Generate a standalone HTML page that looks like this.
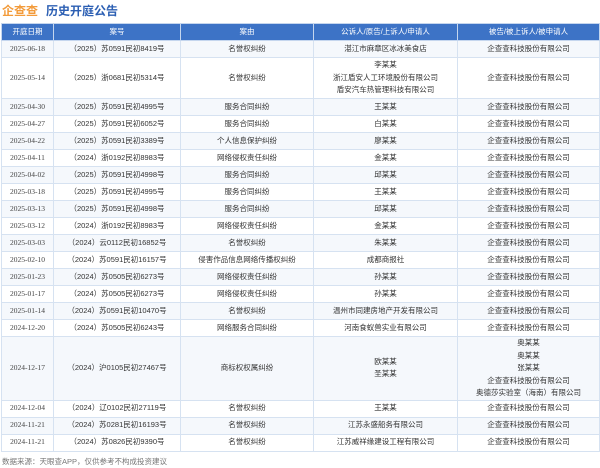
<!DOCTYPE html><html><head><meta charset="utf-8"><style>
body{margin:0;width:600px;height:468px;background:#fff;font-family:"Liberation Sans","Noto Sans CJK SC",sans-serif;position:relative;overflow:hidden}
.t{position:absolute;top:2px;left:2px;font-size:12px;font-weight:bold;white-space:nowrap}
.t .a{color:#f39b3a}.t .b{color:#2c5fb3;margin-left:8px}
table{position:absolute;top:23px;left:1px;width:598px;border-collapse:collapse;table-layout:fixed;font-size:7.5px;color:#333}
td,th{border:1px solid #d6e2f1;text-align:center;padding:0;line-height:12.5px}
th{background:#3d73c6;color:#fff;font-weight:normal;height:16px;border-color:#c5d6ee}
tr{height:17px}
tbody tr:nth-child(odd){background:#f5f8fc}
td.d{font-family:"Liberation Serif","Noto Sans CJK SC",serif;color:#444}
.f{position:absolute;top:456px;left:2px;font-size:7.5px;color:#777;white-space:nowrap}
</style></head><body>
<div class="t"><span class="a">企查查</span><span class="b">历史开庭公告</span></div>
<table>
<colgroup><col style="width:52px"><col style="width:127px"><col style="width:133px"><col style="width:144px"><col style="width:142px"></colgroup>
<thead><tr><th>开庭日期</th><th>案号</th><th>案由</th><th>公诉人/原告/上诉人/申请人</th><th>被告/被上诉人/被申请人</th></tr></thead>
<tbody>
<tr><td class="d">2025-06-18</td><td>（2025）苏0591民初8419号</td><td>名誉权纠纷</td><td>湛江市麻章区冰冰美食店</td><td>企查查科技股份有限公司</td></tr>
<tr style="height:41px"><td class="d">2025-05-14</td><td>（2025）浙0681民初5314号</td><td>名誉权纠纷</td><td>李某某<br>浙江盾安人工环境股份有限公司<br>盾安汽车热管理科技有限公司</td><td>企查查科技股份有限公司</td></tr>
<tr><td class="d">2025-04-30</td><td>（2025）苏0591民初4995号</td><td>服务合同纠纷</td><td>王某某</td><td>企查查科技股份有限公司</td></tr>
<tr><td class="d">2025-04-27</td><td>（2025）苏0591民初6052号</td><td>服务合同纠纷</td><td>白某某</td><td>企查查科技股份有限公司</td></tr>
<tr><td class="d">2025-04-22</td><td>（2025）苏0591民初3389号</td><td>个人信息保护纠纷</td><td>廖某某</td><td>企查查科技股份有限公司</td></tr>
<tr><td class="d">2025-04-11</td><td>（2024）浙0192民初8983号</td><td>网络侵权责任纠纷</td><td>金某某</td><td>企查查科技股份有限公司</td></tr>
<tr><td class="d">2025-04-02</td><td>（2025）苏0591民初4998号</td><td>服务合同纠纷</td><td>邱某某</td><td>企查查科技股份有限公司</td></tr>
<tr><td class="d">2025-03-18</td><td>（2025）苏0591民初4995号</td><td>服务合同纠纷</td><td>王某某</td><td>企查查科技股份有限公司</td></tr>
<tr><td class="d">2025-03-13</td><td>（2025）苏0591民初4998号</td><td>服务合同纠纷</td><td>邱某某</td><td>企查查科技股份有限公司</td></tr>
<tr><td class="d">2025-03-12</td><td>（2024）浙0192民初8983号</td><td>网络侵权责任纠纷</td><td>金某某</td><td>企查查科技股份有限公司</td></tr>
<tr><td class="d">2025-03-03</td><td>（2024）云0112民初16852号</td><td>名誉权纠纷</td><td>朱某某</td><td>企查查科技股份有限公司</td></tr>
<tr><td class="d">2025-02-10</td><td>（2024）苏0591民初16157号</td><td>侵害作品信息网络传播权纠纷</td><td>成都商报社</td><td>企查查科技股份有限公司</td></tr>
<tr><td class="d">2025-01-23</td><td>（2024）苏0505民初6273号</td><td>网络侵权责任纠纷</td><td>孙某某</td><td>企查查科技股份有限公司</td></tr>
<tr><td class="d">2025-01-17</td><td>（2024）苏0505民初6273号</td><td>网络侵权责任纠纷</td><td>孙某某</td><td>企查查科技股份有限公司</td></tr>
<tr><td class="d">2025-01-14</td><td>（2024）苏0591民初10470号</td><td>名誉权纠纷</td><td>温州市同建房地产开发有限公司</td><td>企查查科技股份有限公司</td></tr>
<tr><td class="d">2024-12-20</td><td>（2024）苏0505民初6243号</td><td>网络服务合同纠纷</td><td>河南食蚁兽实业有限公司</td><td>企查查科技股份有限公司</td></tr>
<tr style="height:63px"><td class="d">2024-12-17</td><td>（2024）沪0105民初27467号</td><td>商标权权属纠纷</td><td>欧某某<br>圣某某</td><td>奥某某<br>奥某某<br>张某某<br>企查查科技股份有限公司<br>奥德莎实验室（海南）有限公司</td></tr>
<tr><td class="d">2024-12-04</td><td>（2024）辽0102民初27119号</td><td>名誉权纠纷</td><td>王某某</td><td>企查查科技股份有限公司</td></tr>
<tr><td class="d">2024-11-21</td><td>（2024）苏0281民初16193号</td><td>名誉权纠纷</td><td>江苏永盛船务有限公司</td><td>企查查科技股份有限公司</td></tr>
<tr><td class="d">2024-11-21</td><td>（2024）苏0826民初9390号</td><td>名誉权纠纷</td><td>江苏威祥缘建设工程有限公司</td><td>企查查科技股份有限公司</td></tr>
</tbody></table>
<div class="f">数据来源：天眼查APP，仅供参考不构成投资建议</div>
</body></html>
